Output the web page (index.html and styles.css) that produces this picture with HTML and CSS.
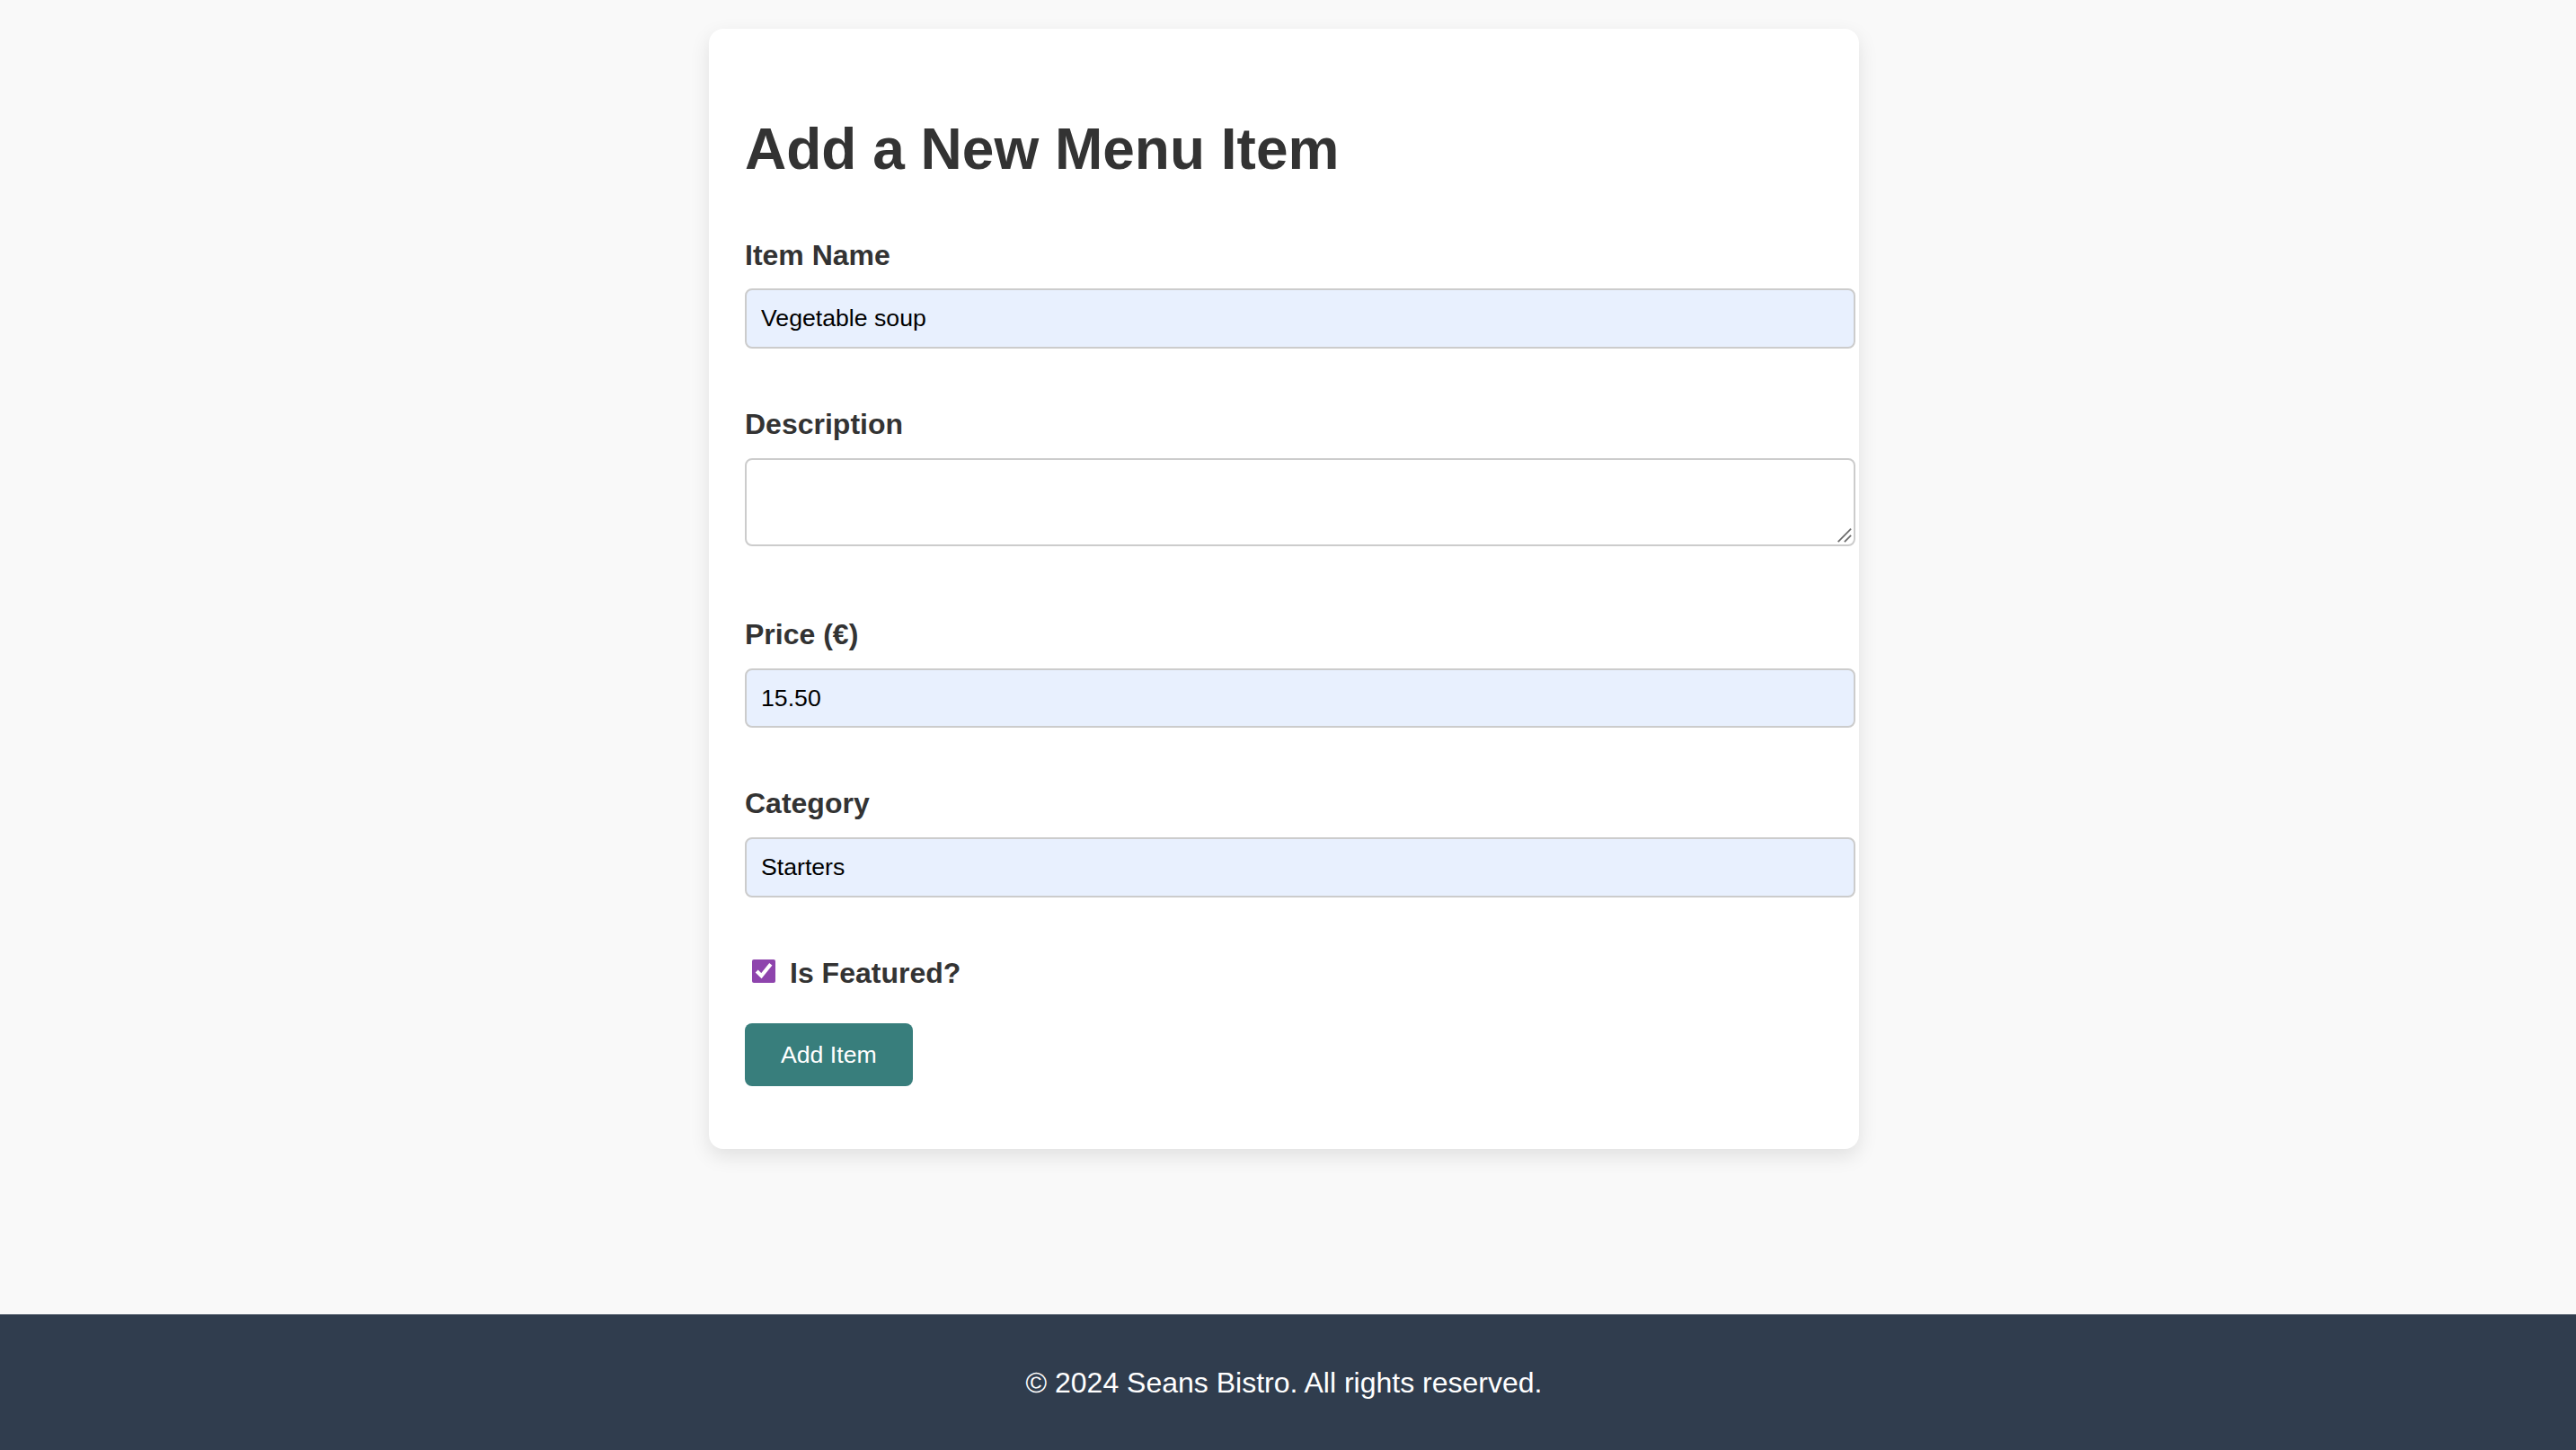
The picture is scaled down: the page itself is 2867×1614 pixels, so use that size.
FILE: index.html
```html
<!DOCTYPE html>
<html lang="en">
<head>
<meta charset="utf-8">
<title>Add a New Menu Item - Seans Bistro</title>
<link rel="stylesheet" href="styles.css">
</head>
<body>
<main class="page">
  <section class="card">
    <h1 class="title">Add a New Menu Item</h1>
    <form class="form">
      <div class="field">
        <label class="field-label" for="name">Item Name</label>
        <input class="field-input is-filled" id="name" type="text" value="Vegetable soup">
      </div>
      <div class="field field-tall">
        <label class="field-label" for="desc">Description</label>
        <div class="area-wrap">
          <textarea class="field-input field-area" id="desc"></textarea>
          <svg class="resizer" viewBox="0 0 20 20" aria-hidden="true">
            <line x1="3" y1="19" x2="19" y2="3" stroke="#6b6b6b" stroke-width="2"/>
            <line x1="11" y1="19" x2="19" y2="11" stroke="#6b6b6b" stroke-width="2"/>
          </svg>
        </div>
      </div>
      <div class="field">
        <label class="field-label" for="price">Price (€)</label>
        <input class="field-input is-filled" id="price" type="text" value="15.50">
      </div>
      <div class="field">
        <label class="field-label" for="cat">Category</label>
        <input class="field-input is-filled" id="cat" type="text" value="Starters">
      </div>
      <div class="check-row">
        <input class="check" id="featured" type="checkbox" checked>
        <label class="check-label" for="featured">Is Featured?</label>
      </div>
      <button class="submit" type="button">Add Item</button>
    </form>
  </section>
</main>
<footer class="site-footer">
  <p class="footer-text">© 2024 Seans Bistro. All rights reserved.</p>
</footer>
</body>
</html>
```
FILE: styles.css
```css
html, body {
  margin: 0;
  padding: 0;
}

body {
  min-height: 100vh;
  display: flex;
  flex-direction: column;
  background: #f9f9f9;
  color: #333;
  font-family: "Liberation Sans", Arial, Helvetica, sans-serif;
}

.page {
  flex: 1;
  display: flex;
  justify-content: center;
  align-items: flex-start;
  padding: 32px 9px 0 0;
}

.card {
  box-sizing: border-box;
  width: 1280px;
  padding: 40px;
  background: #fff;
  border-radius: 16px;
  box-shadow: 0 8px 22px rgba(0, 0, 0, 0.1);
}

.title {
  margin: 58px 0 62px;
  font-size: 64px;
  line-height: 1.15;
  font-weight: bold;
  color: #333;
}

.form {
  margin: 0 0 30px;
}

.field {
  margin-bottom: 66px;
}

.field-tall {
  margin-bottom: 80px;
}

.field-label {
  display: block;
  margin-bottom: 19px;
  font-size: 32px;
  line-height: 1.15;
  font-weight: bold;
  color: #333;
}

.field-input {
  display: block;
  box-sizing: border-box;
  width: calc(100% + 36px);
  margin: 0;
  padding: 16px;
  border: 2px solid #ccc;
  border-radius: 8px;
  background: #fff;
  color: #000;
  font-family: "Liberation Sans", Arial, Helvetica, sans-serif;
  font-size: 26.67px;
  line-height: 1.15;
  outline: none;
}

.is-filled {
  background: #e8f0fe;
}

.area-wrap {
  position: relative;
  width: calc(100% + 36px);
}

.field-area {
  width: 100%;
  height: 98px;
  resize: none;
}

.resizer {
  position: absolute;
  right: 4px;
  bottom: 4px;
  width: 18px;
  height: 18px;
  pointer-events: none;
}

.check-row {
  display: flex;
  align-items: center;
  gap: 16px;
  padding-left: 8px;
  margin-bottom: 37px;
}

.check {
  width: 26px;
  height: 26px;
  margin: 0 0 5px 0;
  accent-color: #8e44ad;
}

.check-label {
  font-size: 32px;
  line-height: 1.15;
  font-weight: bold;
  color: #333;
}

.submit {
  display: block;
  padding: 20px 40px;
  border: 0;
  border-radius: 8px;
  background: #387e7c;
  color: #fff;
  font-family: "Liberation Sans", Arial, Helvetica, sans-serif;
  font-size: 26.67px;
  line-height: 1.15;
  cursor: pointer;
}

.site-footer {
  box-sizing: border-box;
  height: 151px;
  padding: 58px 9px 0 0;
  background: #303d4e;
  color: #fff;
  text-align: center;
}

.footer-text {
  margin: 0;
  font-size: 32px;
  line-height: 1.15;
}
```
